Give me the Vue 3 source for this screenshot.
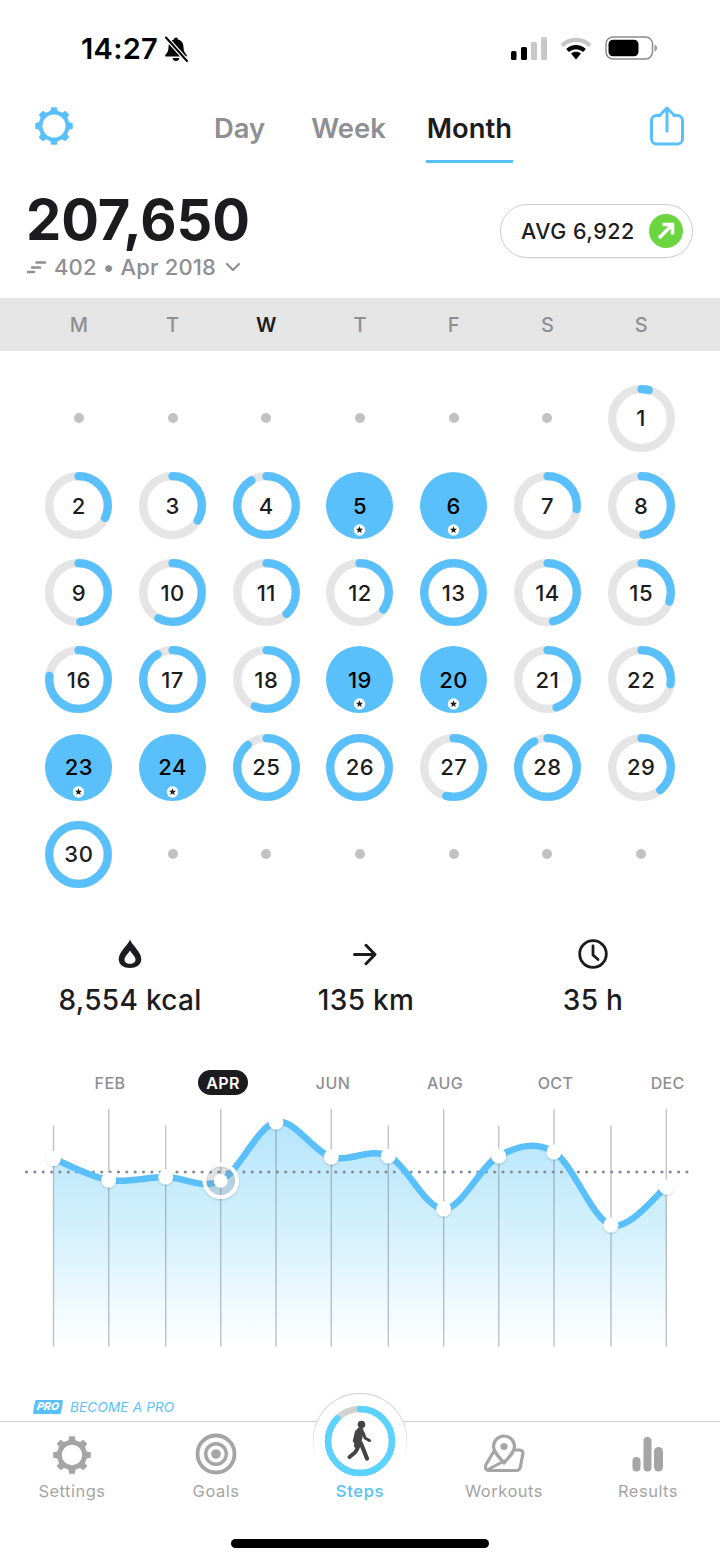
<script setup>
const FULL = { 5: 1, 6: 1, 19: 1, 20: 1, 23: 1, 24: 1 }
const PROGRESS = { 1: 4, 2: 32, 3: 33.5, 4: 91.4, 7: 27, 8: 49, 9: 49, 10: 58, 11: 38, 12: 35, 13: 100, 14: 47, 15: 30, 16: 77, 17: 91.5, 18: 56.6, 21: 45, 22: 27.6, 25: 89, 26: 100, 27: 54, 28: 92.5, 29: 39, 30: 99.4 }
const weekdays = ['M', 'T', 'W', 'T', 'F', 'S', 'S']
const cells = []
for (let i = 0; i < 6; i++) cells.push({ id: 'a' + i, day: 0 })
for (let d = 1; d <= 30; d++) cells.push({ id: 'd' + d, day: d, full: !!FULL[d], pct: PROGRESS[d] || 0 })
for (let i = 0; i < 6; i++) cells.push({ id: 'b' + i, day: 0 })

function star(cx, cy, R, r) {
  const pts = []
  for (let i = 0; i < 10; i++) {
    const a = -Math.PI / 2 + (i * Math.PI) / 5
    const q = i % 2 ? r : R
    pts.push((cx + q * Math.cos(a)).toFixed(2) + ',' + (cy + q * Math.sin(a)).toFixed(2))
  }
  return pts.join(' ')
}
const starPoints = star(33.5, 58, 3.7, 1.6)

function gear(cx, cy, ro, rr, hole, teeth) {
  const step = (Math.PI * 2) / teeth
  let d = ''
  for (let i = 0; i < teeth; i++) {
    const a = -Math.PI / 2 + i * step
    const w = step * 0.19
    const w2 = step * 0.3
    const p = [
      [rr, a - w2], [ro, a - w], [ro, a + w], [rr, a + w2]
    ].map(([q, t]) => (cx + q * Math.cos(t)).toFixed(2) + ' ' + (cy + q * Math.sin(t)).toFixed(2))
    d += (i === 0 ? 'M' : 'L') + p[0] + ' L' + p[1] + ' L' + p[2] + ' L' + p[3] + ' '
  }
  d += 'Z M' + (cx + hole) + ' ' + cy + ' a' + hole + ' ' + hole + ' 0 1 0 ' + -2 * hole + ' 0 a' + hole + ' ' + hole + ' 0 1 0 ' + 2 * hole + ' 0 Z'
  return d
}
const gearBlue = gear(20, 20, 19, 15.6, 11.5, 8)
const gearGray = gear(20, 20, 19, 15.2, 10.2, 8)

const TOP = 1060
const pts = [
  [53.5, 1158.5], [108.7, 1180], [165.7, 1177], [220.7, 1180.7], [276, 1122], [331.3, 1157],
  [388.3, 1156], [443.7, 1209], [498.7, 1156], [554, 1152], [611, 1225], [666.3, 1187]
].map(([x, y]) => [x, y - TOP])
const gridLines = pts.map((p, i) => ({ x: p[0], top: i % 2 ? 49 : 65.7 }))
gridLines[4].top = 62
const bottom = 286.7
let curve = 'M' + pts[0][0] + ' ' + pts[0][1]
for (let i = 0; i < pts.length - 1; i++) {
  const p0 = pts[Math.max(i - 1, 0)]
  const p1 = pts[i]
  const p2 = pts[i + 1]
  const p3 = pts[Math.min(i + 2, pts.length - 1)]
  const c1x = p1[0] + (p2[0] - p0[0]) / 6
  const c1y = p1[1] + (p2[1] - p0[1]) / 6
  const c2x = p2[0] - (p3[0] - p1[0]) / 6
  const c2y = p2[1] - (p3[1] - p1[1]) / 6
  curve += ` C${c1x.toFixed(1)} ${c1y.toFixed(1)} ${c2x.toFixed(1)} ${c2y.toFixed(1)} ${p2[0]} ${p2[1]}`
}
const area = curve + ` L${pts[11][0]} ${bottom} L${pts[0][0]} ${bottom} Z`
const dots = []
for (let x = 26.5; x < 690; x += 8.36) dots.push(+x.toFixed(1))
const plain = pts.filter((_, i) => i !== 3)
const labels = [
  { t: 'FEB', x: 110 }, { t: 'JUN', x: 333 }, { t: 'AUG', x: 445 }, { t: 'OCT', x: 555.5 }, { t: 'DEC', x: 667.7 }
]
</script>

<template>
  <div class="page">
    <div class="status">
      <span class="time">14:27</span>
      <svg class="bell" width="26" height="26" viewBox="0 0 26 26">
        <path d="M13 1.5c1.2 0 2 .8 2.1 1.9 3.6 1 5.4 4 5.4 7.6 0 3.600 1 5.600 3 7.700.7.800.3 1.800-.8 1.800H3.300c-1.100 0-1.500-1-.8-1.800 2-2.100 3-4.100 3-7.700 0-3.600 1.800-6.600 5.400-7.600.1-1.100.9-1.900 2.100-1.900zM9.600 22h6.800c-.2 1.800-1.600 3-3.400 3s-3.200-1.200-3.400-3z" fill="#000" />
        <path d="M3 1.500 24 25" stroke="#fff" stroke-width="4.500" />
        <path d="M3 1.500 24 25" stroke="#000" stroke-width="2" stroke-linecap="round" />
      </svg>
      <svg class="signal" width="36" height="23" viewBox="0 0 36 23">
        <rect x="0" y="14" width="5.500" height="9" rx="1.500" fill="#000" />
        <rect x="10" y="10" width="6" height="13" rx="1.500" fill="#000" />
        <rect x="20" y="5" width="6" height="18" rx="1.500" fill="#c8c8c8" />
        <rect x="30" y="0" width="6" height="23" rx="1.500" fill="#c8c8c8" />
      </svg>
      <svg class="wifi" width="32" height="24" viewBox="0 0 32 24">
        <path d="M2 9.500C9.800 2 22.200 2 30 9.500" fill="none" stroke="#c6c6c6" stroke-width="4.200" />
        <path d="M7.500 14.500c4.900-4.400 12.100-4.400 17 0" fill="none" stroke="#000" stroke-width="4.200" />
        <path d="M11 17.600c3-2.400 7-2.400 10 0L16 23.500z" fill="#000" />
      </svg>
      <svg class="battery" width="52" height="24" viewBox="0 0 52 24">
        <rect x="1" y="1" width="46.500" height="22" rx="7" fill="none" stroke="#8c8c8c" stroke-width="1.500" />
        <rect x="3.500" y="3.800" width="30" height="16.500" rx="4.500" fill="#000" />
        <path d="M49.500 8.500c1.500.4 2.500 1.800 2.500 3.500s-1 3.100-2.500 3.500z" fill="#9a9a9a" />
      </svg>
    </div>

    <nav class="topnav">
      <svg class="gear" width="40" height="40" viewBox="0 0 40 40">
        <path :d="gearBlue" fill="#5ac0fc" fill-rule="evenodd" />
      </svg>
      <div class="tabs">
        <span class="tab t-day">Day</span>
        <span class="tab t-week">Week</span>
        <span class="tab active">Month</span>
      </div>
      <svg class="share" width="36" height="40" viewBox="0 0 36 40">
        <path d="M11 9.500H7.500a5 5 0 0 0-5 5V33a5 5 0 0 0 5 5h21a5 5 0 0 0 5-5V14.500a5 5 0 0 0-5-5H25" fill="none" stroke="#5ac0fc" stroke-width="3" stroke-linecap="round" />
        <path d="M18 25V2.500M11.500 8.500 18 2l6.500 6.500" fill="none" stroke="#5ac0fc" stroke-width="3" stroke-linecap="round" stroke-linejoin="round" />
      </svg>
    </nav>

    <section class="summary">
      <div class="totals">
        <div class="big">207,650</div>
        <div class="sub">
          <svg width="20" height="14" viewBox="0 0 20 14">
            <path d="M9.500 2.500H18M5 7.500h8M1 12h6" fill="none" stroke="#8e8e93" stroke-width="2.600" stroke-linecap="round" />
          </svg>
          <span class="sub-text">402 • Apr 2018</span>
          <svg width="16" height="10" viewBox="0 0 16 10">
            <path d="M2 2l6 6 6-6" fill="none" stroke="#8e8e93" stroke-width="2.200" stroke-linecap="round" stroke-linejoin="round" />
          </svg>
        </div>
      </div>
      <div class="pill">
        <span>AVG 6,922</span>
        <svg width="34" height="34" viewBox="0 0 34 34">
          <circle cx="17" cy="17" r="17" fill="#6bd63f" />
          <path d="M10 24 23 11M13.500 10.500H23.500V20.500" fill="none" stroke="#fff" stroke-width="3.600" />
        </svg>
      </div>
    </section>

    <div class="weekbar">
      <span v-for="(w, i) in weekdays" :key="i" class="wd" :class="{ today: i === 2 }">{{ w }}</span>
    </div>

    <section class="calendar">
      <div v-for="c in cells" :key="c.id" class="cell">
        <span v-if="!c.day" class="empty"></span>
        <template v-else>
          <svg class="ring" width="67" height="67" viewBox="0 0 67 67">
            <template v-if="c.full">
              <circle cx="33.500" cy="33.500" r="33.500" fill="#5ac0fc" />
              <circle cx="33.500" cy="58" r="5.700" fill="#fff" />
              <polygon :points="starPoints" fill="#1c1c1e" />
            </template>
            <template v-else>
              <circle cx="33.500" cy="33.500" r="29.300" fill="none" stroke="#e5e5e5" stroke-width="8.300" />
              <circle
                cx="33.500" cy="33.500" r="29.300" fill="none" stroke="#5ac0fc" stroke-width="8.300"
                stroke-linecap="round" pathLength="100" :stroke-dasharray="c.pct + ' 100'"
                transform="rotate(-90 33.500 33.500)"
              />
            </template>
          </svg>
          <span class="num" :class="{ dark: c.full }">{{ c.day }}</span>
        </template>
      </div>
    </section>

    <section class="stats">
      <div class="stat s1">
        <svg width="26" height="30" viewBox="0 0 26 30">
          <path fill-rule="evenodd" d="M13 .5C15 6 24.300 13 24.300 20 24.300 26 19 29 13 29S1.700 26 1.700 20C1.700 13 11 6 13 .5ZM13 11.500C11 15 7.500 17.500 7.500 20.700 7.500 23.500 10 24.800 13 24.800S18.500 23.500 18.500 20.700C18.500 17.500 15 15 13 11.500Z" fill="#1c1c1e" />
        </svg>
        <span class="val">8,554 kcal</span>
      </div>
      <div class="stat s2">
        <svg width="26" height="30" viewBox="0 0 26 30">
          <path d="M2.500 15h20M14 5.800l9 9.200-9 9.200" fill="none" stroke="#1c1c1e" stroke-width="3" stroke-linecap="round" stroke-linejoin="round" transform="translate(-1 .5)" />
        </svg>
        <span class="val">135 km</span>
      </div>
      <div class="stat s3">
        <svg width="30" height="30" viewBox="0 0 30 30">
          <circle cx="15" cy="15" r="13.300" fill="none" stroke="#1c1c1e" stroke-width="2.800" />
          <path d="M15 7v9l5 4.500" fill="none" stroke="#1c1c1e" stroke-width="2.800" stroke-linecap="round" stroke-linejoin="round" />
        </svg>
        <span class="val">35 h</span>
      </div>
    </section>

    <svg class="chart" width="720" height="300" viewBox="0 0 720 300">
      <defs>
        <linearGradient id="fade" x1="0" y1="62" x2="0" y2="287" gradientUnits="userSpaceOnUse">
          <stop offset="0" stop-color="#b5e5fb" />
          <stop offset="0.5" stop-color="#d5f1fd" />
          <stop offset="1" stop-color="#ffffff" />
        </linearGradient>
        <filter id="soft" x="-60%" y="-60%" width="220%" height="220%">
          <feDropShadow dx="0" dy="1" stdDeviation="1.200" flood-color="#000" flood-opacity="0.18" />
        </filter>
      </defs>
      <text v-for="l in labels" :key="l.t" :x="l.x" y="28.500" text-anchor="middle" class="mlabel">{{ l.t }}</text>
      <rect x="198" y="10" width="50" height="25" rx="12.500" fill="#1c1c1e" />
      <text x="223" y="28.500" text-anchor="middle" class="mlabel on">APR</text>
      <path :d="area" fill="url(#fade)" />
      <line v-for="(g, i) in gridLines" :key="i" :x1="g.x" :x2="g.x" :y1="g.top" :y2="bottom" stroke="#6e7880" stroke-opacity="0.42" stroke-width="1.500" />
      <circle v-for="x in dots" :key="x" :cx="x" cy="112" r="1.600" fill="#868c92" />
      <path :d="curve" fill="none" stroke="#5ac0fc" stroke-width="6.500" stroke-linejoin="round" />
      <circle v-for="(p, i) in plain" :key="i" :cx="p[0]" :cy="p[1]" r="7.500" fill="#fff" filter="url(#soft)" />
      <circle cx="220.700" cy="120.700" r="16.300" fill="#8a8f94" fill-opacity="0.22" stroke="#fff" stroke-width="4" filter="url(#soft)" />
      <circle cx="220.700" cy="120.700" r="7" fill="#fff" />
    </svg>

    <div class="promo">
      <span class="probadge">PRO</span>
      <span class="protext">BECOME A PRO</span>
    </div>

    <footer class="tabbar">
      <svg class="bump" width="100" height="76" viewBox="0 0 100 76">
        <defs>
          <linearGradient id="bumpfade" gradientUnits="userSpaceOnUse" x1="0" y1="0" x2="0" y2="66">
            <stop offset="0" stop-color="#d8d8d8" />
            <stop offset="0.55" stop-color="#e2e2e2" />
            <stop offset="1" stop-color="#ffffff" />
          </linearGradient>
        </defs>
        <circle cx="50" cy="47" r="46.700" fill="#fff" stroke="url(#bumpfade)" stroke-width="1.200" />
      </svg>
      <div class="item">
        <svg width="40" height="40" viewBox="0 0 40 40"><path :d="gearGray" fill="#a5a5a5" fill-rule="evenodd" /></svg>
        <span>Settings</span>
      </div>
      <div class="item">
        <svg width="42" height="42" viewBox="0 0 42 42">
          <circle cx="21" cy="21" r="18.500" fill="none" stroke="#a5a5a5" stroke-width="3.800" />
          <circle cx="21" cy="21" r="10.300" fill="none" stroke="#a5a5a5" stroke-width="3.400" />
          <circle cx="21" cy="21" r="4.800" fill="#a5a5a5" />
        </svg>
        <span>Goals</span>
      </div>
      <div class="item active">
        <svg class="stepring" width="72" height="72" viewBox="0 0 72 72">
          <circle cx="36" cy="36" r="32" fill="#fff" stroke="#d2d2d2" stroke-width="6.500" />
          <circle cx="36" cy="36" r="32" fill="none" stroke="#5cd3ff" stroke-width="6.500" stroke-linecap="round" pathLength="100" stroke-dasharray="87.500 100" transform="rotate(-90 36 36)" />
          <circle cx="37.500" cy="19.500" r="3.800" fill="#444" />
          <path d="M36 26 33.500 40" fill="none" stroke="#444" stroke-width="7" stroke-linecap="round" />
          <path d="M37 38.500 43 53.500" fill="none" stroke="#444" stroke-width="4.200" stroke-linecap="round" />
          <path d="M33.500 43.500 31 47.500 25.500 52" fill="none" stroke="#444" stroke-width="4" stroke-linecap="round" />
          <path d="M39 27.500 41 33 45.500 35.500" fill="none" stroke="#444" stroke-width="3" stroke-linecap="round" stroke-linejoin="round" />
          <path d="M32.500 27 30.500 36" fill="none" stroke="#444" stroke-width="3.400" stroke-linecap="round" />
        </svg>
        <span>Steps</span>
      </div>
      <div class="item">
        <svg width="42" height="42" viewBox="0 0 42 42">
          <path d="M21 30C14.500 22.500 10.500 18.500 10.500 13.500a10.500 10.500 0 0 1 21 0C31.500 18.500 27.500 22.500 21 30Z" fill="none" stroke="#a5a5a5" stroke-width="3.200" stroke-linejoin="round" />
          <circle cx="21" cy="13.500" r="3.600" fill="#a5a5a5" />
          <path d="M10.500 19 3 31.500C1.800 34.500 2.800 37.500 6 37.500H33.500C36 37.500 37 36 37.400 34L39.800 21C40.200 18.500 39 17 36.500 17H32" fill="none" stroke="#a5a5a5" stroke-width="3.200" stroke-linecap="round" stroke-linejoin="round" />
          <path d="M6 36 21 28" fill="none" stroke="#a5a5a5" stroke-width="3" stroke-linecap="round" />
        </svg>
        <span>Workouts</span>
      </div>
      <div class="item">
        <svg width="42" height="42" viewBox="0 0 42 42">
          <rect x="5.500" y="24" width="8" height="14.500" rx="4" fill="#a5a5a5" />
          <rect x="16.500" y="4" width="8" height="34.500" rx="4" fill="#a5a5a5" />
          <rect x="27" y="14" width="9" height="24.500" rx="4.500" fill="#a5a5a5" />
        </svg>
        <span>Results</span>
      </div>
      <div class="home"></div>
    </footer>
  </div>
</template>

<style>
html, body { margin: 0; background: #fff; }
</style>

<style scoped>
.page {
  width: 720px;
  height: 1561px;
  overflow: hidden;
  display: flex;
  flex-direction: column;
  background: #fff;
  color: #1c1c1e;
  font-family: Inter, "Liberation Sans", sans-serif;
}
svg { display: block; flex: none; }
.status {
  height: 96px;
  flex: none;
  display: flex;
  align-items: flex-start;
  padding-left: 81px;
  box-sizing: border-box;
}
.time {
  margin-top: 30px;
  font-size: 29px;
  line-height: 38px;
  font-weight: 600;
  letter-spacing: 0.3px;
  color: #000;
}
.bell { margin: 36px 0 0 5px; }
.signal { margin: 37px 0 0 322px; }
.wifi { margin: 36px 0 0 13px; }
.battery { margin: 36px 0 0 13px; }

.topnav { height: 70px; flex: none; display: flex; align-items: flex-start; }
.gear { margin: 10px 0 0 34px; }
.tabs { display: flex; margin-left: 139px; margin-top: 15px; }
.tab {
  font-size: 27.400px;
  line-height: 34px;
  font-weight: 600;
  color: #8e8e93;
  padding: 0 1px 15px;
  border-bottom: 3px solid transparent;
}
.t-day { margin-right: 44px; }
.t-week { margin-right: 39px; }
.tab.active { color: #1c1c1e; border-bottom-color: #5ac0fc; }
.share { margin: 10px 0 0 auto; margin-right: 35px; }

.summary {
  height: 132px;
  flex: none;
  display: flex;
  justify-content: space-between;
  align-items: flex-start;
}
.totals { margin: 24px 0 0 26px; }
.big {
  font-size: 56px;
  line-height: 60px;
  font-weight: 700;
  letter-spacing: -0.100px;
  color: #1c1c1e;
}
.sub { display: flex; align-items: center; height: 30px; margin-top: 2px; margin-left: 1px; color: #8e8e93; }
.sub-text { font-size: 22px; font-weight: 500; margin: 0 9px 0 7px; letter-spacing: 0.150px; }
.pill {
  margin: 38px 27px 0 0;
  width: 193px;
  height: 54px;
  box-sizing: border-box;
  border: 1px solid #cfcfcf;
  border-radius: 27px;
  display: flex;
  align-items: center;
  justify-content: space-between;
  padding: 0 9px 0 20px;
  font-size: 21.500px;
  letter-spacing: 0.500px;
  font-weight: 500;
  box-shadow: 0 1px 2px rgba(0, 0, 0, 0.06);
}

.weekbar {
  height: 53px;
  flex: none;
  background: #e5e5e5;
  display: grid;
  grid-template-columns: repeat(7, 1fr);
  padding: 0 32px;
  align-items: center;
}
.wd { text-align: center; font-size: 20px; font-weight: 500; color: #8e8e93; }
.wd.today { color: #1c1c1e; font-weight: 600; }

.calendar {
  flex: none;
  display: grid;
  grid-template-columns: repeat(7, 1fr);
  grid-auto-rows: 87.200px;
  padding: 23.800px 32px 0;
  height: 560px;
  box-sizing: border-box;
}
.cell { position: relative; display: flex; align-items: center; justify-content: center; }
.empty { width: 10px; height: 10px; border-radius: 50%; background: #c1c1c6; }
.num {
  position: absolute;
  inset: 0;
  display: flex;
  align-items: center;
  justify-content: center;
  font-size: 22px;
  font-weight: 500;
  letter-spacing: 0.500px;
  color: #1c1c1e;
}
.num.dark { color: #000; }

.stats { height: 149px; flex: none; position: relative; display: flex; box-sizing: border-box; }
.stat { position: absolute; top: 28px; display: flex; flex-direction: column; align-items: center; width: 240px; }
.s1 { left: 10px; }
.s2 { left: 246px; }
.s3 { left: 473px; }
.val { margin-top: 14px; font-size: 28px; line-height: 34px; font-weight: 500; letter-spacing: 0.300px; color: #1c1c1e; }

.chart { flex: none; }
.mlabel { font-family: Inter, sans-serif; font-size: 16px; font-weight: 500; fill: #8e8e93; letter-spacing: 0.4px; }
.mlabel.on { fill: #fff; font-weight: 600; }

.promo { height: 61px; flex: none; display: flex; align-items: flex-end; padding: 0 0 7px 34px; box-sizing: border-box; gap: 8px; }
.probadge {
  width: 28px;
  height: 14px;
  background: #5ac0fc;
  color: #fff;
  font-size: 10.500px;
  line-height: 14px;
  font-weight: 800;
  font-style: italic;
  text-align: center;
  transform: skewX(-10deg);
  border-radius: 1.500px;
}
.protext { font-size: 13.500px; line-height: 14px; font-style: italic; color: #5ac0fc; letter-spacing: 0.200px; }

.tabbar {
  position: relative;
  flex: 1;
  display: grid;
  grid-template-columns: repeat(5, 144px);
  border-top: 1px solid #d0d0d0;
  align-content: start;
}
.bump { position: absolute; left: 310px; top: -29px; }
.item {
  position: relative;
  height: 79px;
  display: flex;
  flex-direction: column;
  align-items: center;
  justify-content: flex-end;
  font-size: 16.500px;
  line-height: 20px;
  color: #a5a5a5;
  letter-spacing: 0.500px;
}
.item svg { margin-bottom: 6px; }
.item.active { color: #5ac0fc; font-weight: 500; letter-spacing: 0.700px; }
.item .stepring { position: absolute; left: 36px; top: -17px; margin: 0; }
.home {
  position: absolute;
  left: 231px;
  top: 117px;
  width: 258px;
  height: 9px;
  border-radius: 4.500px;
  background: #000;
}
</style>
